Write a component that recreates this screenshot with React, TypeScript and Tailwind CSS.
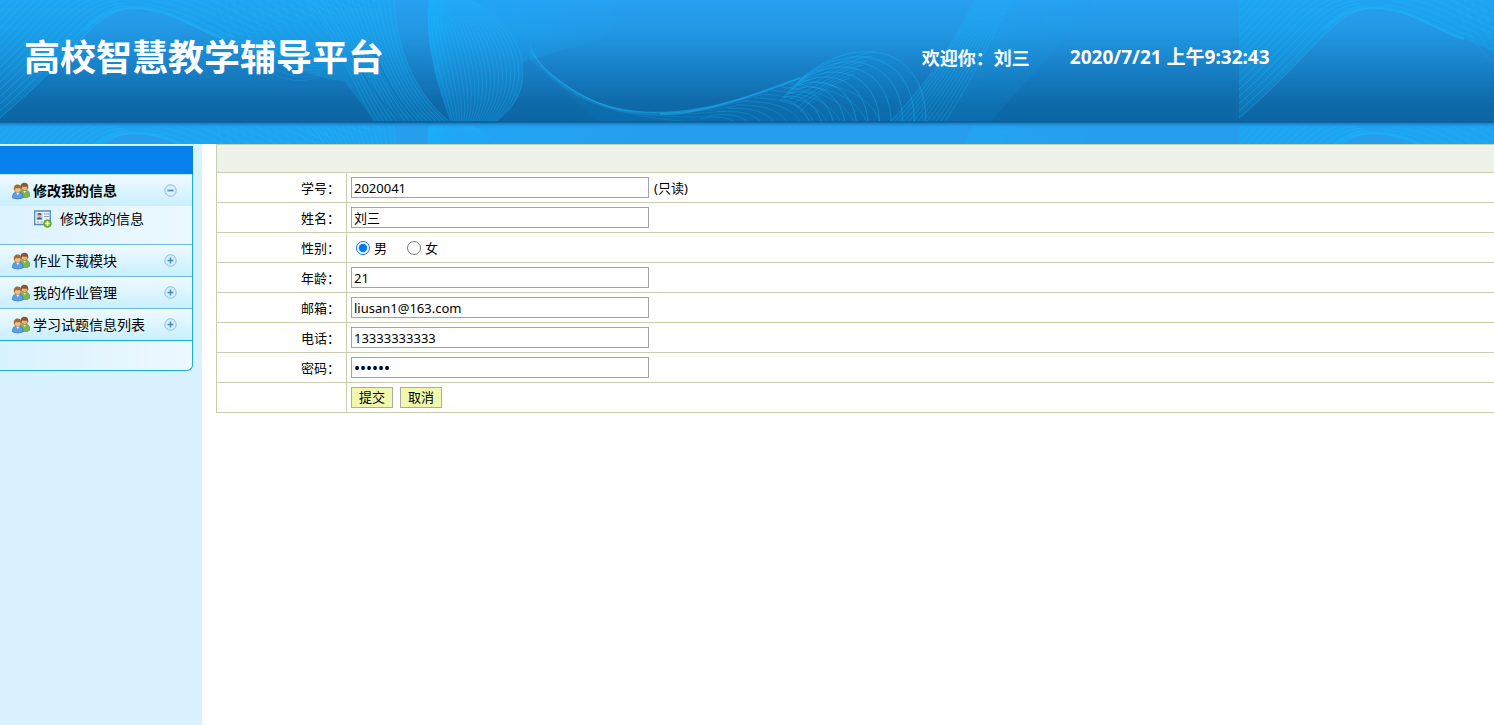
import { useState, type ReactNode } from 'react';

type Curve = number[];

/* Blends two cubic curves into a fan of evenly spaced lines. */
function fan(from: Curve, to: Curve, count: number): string {
  const lines: string[] = [];
  for (let i = 0; i < count; i++) {
    const t = i / (count - 1);
    const p = from.map((v, k) => (v + (to[k] - v) * t).toFixed(1));
    lines.push(`M${p[0]} ${p[1]}C${p[2]} ${p[3]} ${p[4]} ${p[5]} ${p[6]} ${p[7]}`);
  }
  return lines.join('');
}

const arches = fan([0, 118, 80, 50, 95, 8, 135, 8], [-60, 20, -40, 0, -20, -30, 10, -40], 22);
const archesRight = fan([135, 8, 180, 12, 205, 35, 225, 39], [300, -60, 330, -40, 360, -20, 400, 0], 20);
const swirls = fan([215, -10, 225, 60, 290, 95, 320, 75], [320, -10, 325, 10, 335, 30, 350, 40], 14);
const ribbon = fan([305, 0, 335, 30, 350, 80, 375, 122], [394, 0, 396, 40, 410, 90, 450, 122], 18);
const sail = fan([429, 0, 424, 45, 440, 90, 451, 122], [470, 0, 530, 30, 540, 90, 495, 122], 22);
const wave = fan([530, 60, 620, 130, 660, 130, 800, 78], [530, 45, 550, 100, 620, 118, 700, 122], 9);
const crest = fan([780, 86, 850, 60, 860, 52, 876, 52], [800, 112, 815, 96, 830, 84, 850, 78], 7);
const loops = fan([800, 80, 850, 35, 926, 40, 926, 122], [780, 100, 790, 98, 802, 108, 810, 122], 11);
const mesh = fan([700, 119, 715, 116, 725, 116, 735, 122], [800, 80, 850, 86, 870, 98, 880, 122], 12);
const rays = fan([975, 0, 950, 50, 925, 85, 890, 122], [1010, 0, 990, 45, 965, 90, 945, 122], 13);

function HeaderArt() {
  return (
    <svg className="absolute inset-0 h-full w-full" aria-hidden="true">
      <defs>
        <linearGradient id="sky" x1="0" y1="0" x2="0" y2="1">
          <stop offset="0" stopColor="#289ff0" />
          <stop offset="0.25" stopColor="#2298e4" />
          <stop offset="0.6" stopColor="#177cc2" />
          <stop offset="0.85" stopColor="#0e69a8" />
          <stop offset="1" stopColor="#0c66a4" />
        </linearGradient>
        <linearGradient id="glow" x1="0" y1="0" x2="1" y2="0">
          <stop offset="0" stopColor="#12b4fb" stopOpacity="0.75" />
          <stop offset="0.12" stopColor="#18acfa" stopOpacity="0.45" />
          <stop offset="0.45" stopColor="#18acfa" stopOpacity="0.35" />
          <stop offset="1" stopColor="#18acfa" stopOpacity="0" />
        </linearGradient>
        <linearGradient id="beam" x1="0" y1="0" x2="1" y2="0">
          <stop offset="0" stopColor="#16b0fa" stopOpacity="0.25" />
          <stop offset="0.5" stopColor="#16b0fa" stopOpacity="0.2" />
          <stop offset="1" stopColor="#16b0fa" stopOpacity="0" />
        </linearGradient>
        <linearGradient id="fade" x1="0" y1="0" x2="0" y2="1">
          <stop offset="0" stopColor="#fff" />
          <stop offset="1" stopColor="#fff" stopOpacity="0.4" />
        </linearGradient>
        <mask id="fadeMask">
          <rect width="1240" height="125" fill="url(#fade)" />
        </mask>
        <linearGradient id="shade" x1="0" y1="0" x2="0" y2="1">
          <stop offset="0" stopColor="#095a92" />
          <stop offset="1" stopColor="#269eed" stopOpacity="0" />
        </linearGradient>
        <pattern id="lines" width="1239" height="125" patternUnits="userSpaceOnUse">
          <g mask="url(#fadeMask)">
            <path d="M0 0V118C80 50 95 8 135 8C180 12 205 35 225 39C260 52 300 75 345 82L375 122H450C410 90 396 40 394 0Z" fill="#10aef5" fillOpacity="0.38" />
            <path d="M429 0C424 45 440 90 451 122H495C520 105 526 85 522 62L600 40L640 0Z" fill="url(#glow)" />
            <path d="M530 60C620 130 660 130 800 78C850 35 926 40 926 122H600Z" fill="#078ad8" fillOpacity="0.28" />
            <path d="M975 0C950 50 925 85 890 122H990L1100 0Z" fill="url(#beam)" />
          </g>
          <g fill="none" stroke="#1cbcff" strokeWidth="1">
            <path d={arches} strokeOpacity="0.36" />
            <path d={archesRight} strokeOpacity="0.26" />
            <path d={swirls} strokeOpacity="0.18" />
            <path d={ribbon} strokeOpacity="0.26" />
            <path d={sail} strokeOpacity="0.24" />
            <path d={wave} strokeOpacity="0.17" />
            <path d={crest} strokeOpacity="0.25" />
            <path d={mesh} strokeOpacity="0.22" />
            <path d={loops} strokeOpacity="0.34" />
            <path d={rays} strokeOpacity="0.26" />
            <path d="M85 30C100 14 115 7 140 8C170 9 190 26 225 39" strokeWidth="3" strokeOpacity="0.3" />
            <path d="M660 114C710 114 760 92 800 78" strokeWidth="2" strokeOpacity="0.35" />
          </g>
          <path d="M352 50C365 85 385 105 402 122M375 55C388 85 400 105 418 122" fill="none" stroke="#075d9c" strokeOpacity="0.5" />
        </pattern>
      </defs>
      <rect width="100%" height="100%" fill="#269eed" />
      <rect width="100%" height="123" fill="url(#sky)" />
      <rect width="100%" height="100%" fill="url(#lines)" />
      <rect y="121" width="100%" height="7" fill="url(#shade)" />
    </svg>
  );
}

function UsersIcon() {
  return (
    <svg viewBox="0 0 18 18" className="h-[18px] w-[18px] shrink-0" aria-hidden="true">
      <path d="M8 15V10.5Q8.400 8.500 11 8.200H14Q17 8.500 17.500 11V14.500Q15 16 11 15.700Z" fill="#78b843" stroke="#4d8a2d" strokeWidth=".5" />
      <path d="M11 8.500L12.700 11L14.200 8.500Z" fill="#f3f5e8" />
      <circle cx="12.500" cy="5.300" r="3.300" fill="#e9b47c" stroke="#86572b" strokeWidth=".6" />
      <path d="M8.600 6C8 2 10.500.5 12.700.7C15.700.8 16.800 3 16 6.800L14.700 4.500Q12 5.200 10.500 4.300L9.600 6Z" fill="#85592c" />
      <path d="M.6 16V13.300Q1 10.600 4 10.300H7.500Q10.500 10.600 10.800 13.300V16Q6 18 .6 16Z" fill="#5c9ee8" stroke="#2f69bb" strokeWidth=".6" />
      <path d="M4 10.300L5.700 13L7.500 10.300Z" fill="#fff" />
      <circle cx="5.700" cy="7.200" r="3.400" fill="#f1c088" stroke="#9a6a31" strokeWidth=".6" />
      <path d="M1.900 7.600C1.300 4 3.500 2.500 5.800 2.600C8.700 2.700 9.900 4.700 9.300 8.200L8 6.100Q5.500 6.900 3.800 6L2.800 7.900Z" fill="#a06d30" />
    </svg>
  );
}

function CardIcon() {
  return (
    <svg viewBox="0 0 18 18" className="h-[18px] w-[18px] shrink-0" aria-hidden="true">
      <path d="M.7 1H16.300V14.500H.7Z" fill="#eef5fd" stroke="#5486c2" strokeWidth="1.300" />
      <rect x="2.500" y="3" width="6" height="6.500" fill="#a9ccf2" />
      <circle cx="5.500" cy="5.200" r="1.700" fill="#e6b176" />
      <path d="M3.700 5Q3.500 3 5.500 3Q7.500 3 7.300 5Q5.500 4 3.700 5Z" fill="#5a4127" />
      <path d="M2.800 9.500Q3 7.200 5.500 7.200Q8 7.200 8.300 9.500Z" fill="#2e62ad" />
      <path d="M10 4H15M10 6.500H15M3 12H5M6.500 12H9" stroke="#7f9fc4" />
      <circle cx="13.500" cy="13.500" r="3.800" fill="#7bbb2f" stroke="#4f8f1c" strokeWidth=".8" />
      <path d="M13.500 11.300V15.700M11.300 13.500H15.700" stroke="#fff" strokeWidth="1.500" />
    </svg>
  );
}

function ToggleIcon({ open }: { open: boolean }) {
  return (
    <svg viewBox="0 0 13 13" className="h-[13px] w-[13px] shrink-0" aria-hidden="true">
      <circle cx="6.500" cy="6.500" r="5.700" fill="#d9effc" stroke="#85bae6" />
      <path d={open ? 'M3.500 6.500H9.500' : 'M3.500 6.500H9.500M6.500 3.500V9.500'} stroke="#4a90cf" strokeWidth="1.700" />
    </svg>
  );
}

const modules = ['修改我的信息', '作业下载模块', '我的作业管理', '学习试题信息列表'];

function Sidebar() {
  const [active, setActive] = useState(0);
  return (
    <aside className="w-[202px] shrink-0 bg-[#d9f2ff] pt-0.5">
      <div className="h-7 w-[193px] bg-[#0580ec]" />
      <nav className="w-[193px] rounded-br-md border-r border-b border-[#1badde] bg-gradient-to-r from-[#d9f2ff] to-[#edf8fe]">
        {modules.map((name, i) => (
          <div key={name}>
            <button
              type="button"
              aria-expanded={active === i}
              onClick={() => setActive(i)}
              className={`flex h-8 w-full items-center border-t bg-gradient-to-b from-[#f0faff] to-[#c8efff] pr-[15px] pl-3 text-left ${
                i === 0 ? 'border-[#b4e6fb]' : 'border-[#6fbde6]'
              }`}
            >
              <UsersIcon />
              <span className={`flex-1 pl-[3px] text-sm ${active === i ? 'font-bold' : ''}`}>{name}</span>
              <ToggleIcon open={active === i} />
            </button>
            {active === i && (
              <div className="h-[38px] bg-gradient-to-r from-[#dcf3ff] to-[#ecf8ff] pt-[3px]">
                <a href="#profile" className="flex items-center gap-2 pl-[34px] text-sm">
                  <CardIcon />
                  {name}
                </a>
              </div>
            )}
          </div>
        ))}
        <div className="h-[30px] border-t border-[#1badde]" />
      </nav>
    </aside>
  );
}

function Row({ label, htmlFor, children }: { label?: string; htmlFor?: string; children: ReactNode }) {
  return (
    <tr className="h-[30px]">
      <th scope="row" className="w-[130px] border border-[#cbceae] pr-1.5 text-right font-normal">
        {label && <label htmlFor={htmlFor}>{label}</label>}
      </th>
      <td className="border-y border-[#cbceae] pl-1">
        <div className="flex items-center">{children}</div>
      </td>
    </tr>
  );
}

const inputClass = 'h-[21px] w-[298px] border border-[#a3a3ad] bg-white px-0.5 outline-none';

function ProfileForm() {
  return (
    <form className="min-w-0 flex-1 pl-[14px]" onSubmit={(e) => e.preventDefault()}>
      <table className="w-full border-collapse text-[13px] leading-5">
        <tbody>
          <tr className="h-7">
            <td colSpan={2} className="border-y border-l border-[#cbceae] bg-[#edf3e9]" />
          </tr>
          <Row label="学号：" htmlFor="number">
            <input id="number" readOnly defaultValue="2020041" className={inputClass} />
            <span className="pl-[5px]">(只读)</span>
          </Row>
          <Row label="姓名：" htmlFor="name">
            <input id="name" defaultValue="刘三" className={inputClass} />
          </Row>
          <Row label="性别：">
            <label className="flex items-center gap-1 pl-[5px]">
              <input type="radio" name="sex" defaultChecked className="h-[14px] w-[14px]" />
              男
            </label>
            <label className="flex items-center gap-1 pl-5">
              <input type="radio" name="sex" className="h-[14px] w-[14px]" />
              女
            </label>
          </Row>
          <Row label="年龄：" htmlFor="age">
            <input id="age" defaultValue="21" className={inputClass} />
          </Row>
          <Row label="邮箱：" htmlFor="email">
            <input id="email" defaultValue="liusan1@163.com" className={inputClass} />
          </Row>
          <Row label="电话：" htmlFor="phone">
            <input id="phone" defaultValue="13333333333" className={inputClass} />
          </Row>
          <Row label="密码：" htmlFor="password">
            <input id="password" type="password" defaultValue="123456" className={`${inputClass} text-base`} />
          </Row>
          <Row>
            <div className="flex gap-[7px]">
              <button type="submit" className="h-[21px] w-[42px] border border-[#aaaaaa] bg-[#eff8ad] leading-[19px]">
                提交
              </button>
              <button type="reset" className="h-[21px] w-[42px] border border-[#aaaaaa] bg-[#eff8ad] leading-[19px]">
                取消
              </button>
            </div>
          </Row>
        </tbody>
      </table>
    </form>
  );
}

export default function App() {
  return (
    <div className="flex min-h-screen flex-col bg-white font-['Noto_Sans','Noto_Sans_CJK_SC',sans-serif] text-black">
      <header className="relative h-36 overflow-hidden">
        <HeaderArt />
        <div className="relative grid h-[116px] grid-cols-[61.7%_148px_1fr] items-center text-lg font-bold whitespace-nowrap text-white">
          <h1 className="pl-6 text-4xl">高校智慧教学辅导平台</h1>
          <span>欢迎你：刘三</span>
          <time className="text-[19px]">2020/7/21 上午9:32:43</time>
        </div>
      </header>
      <div className="flex flex-1">
        <Sidebar />
        <main className="flex min-w-0 flex-1">
          <ProfileForm />
        </main>
      </div>
    </div>
  );
}
